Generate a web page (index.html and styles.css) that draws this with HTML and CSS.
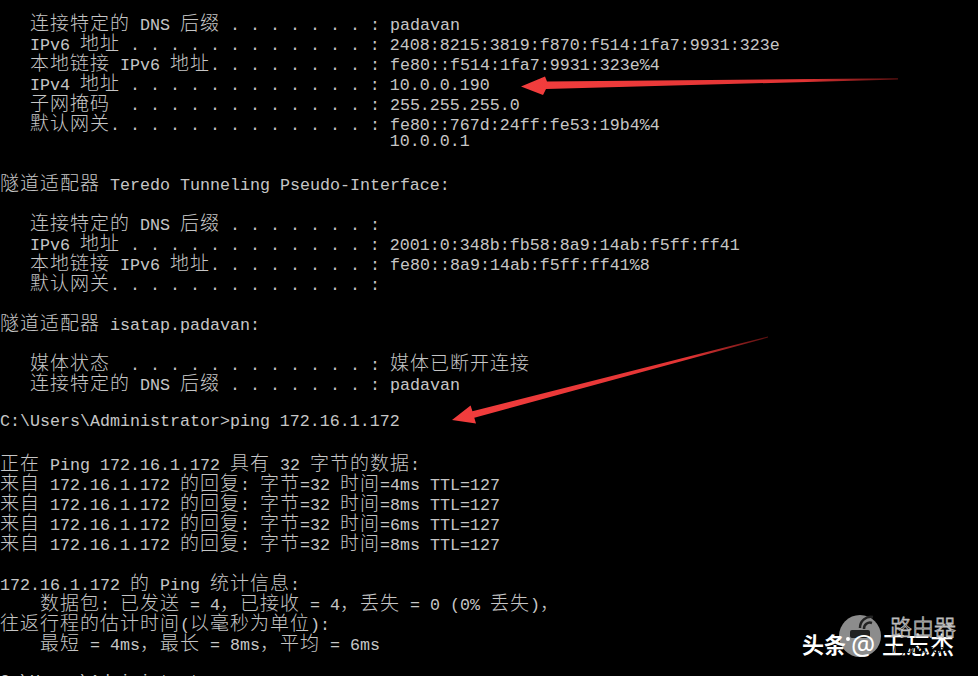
FILE: index.html
```html
<!DOCTYPE html>
<html lang="zh-CN">
<head>
<meta charset="utf-8">
<title>命令提示符</title>
<link rel="stylesheet" href="styles.css">
</head>
<body>
<main class="console">
<div class="l">   <span class="c">连接特定的</span> DNS <span class="c">后缀</span> . . . . . . . : padavan</div>
<div class="l">   IPv6 <span class="c">地址</span> . . . . . . . . . . . . : 2408:8215:3819:f870:f514:1fa7:9931:323e</div>
<div class="l">   <span class="c">本地链接</span> IPv6 <span class="c">地址</span>. . . . . . . . : fe80::f514:1fa7:9931:323e%4</div>
<div class="l">   IPv4 <span class="c">地址</span> . . . . . . . . . . . . : 10.0.0.190</div>
<div class="l">   <span class="c">子网掩码</span>  . . . . . . . . . . . . : 255.255.255.0</div>
<div class="l">   <span class="c">默认网关</span>. . . . . . . . . . . . . : fe80::767d:24ff:fe53:19b4%4</div>
<div class="l">                                       10.0.0.1</div>
<div class="l"> </div>
<div class="l"><span class="c">隧道适配器</span> Teredo Tunneling Pseudo-Interface:</div>
<div class="l"> </div>
<div class="l">   <span class="c">连接特定的</span> DNS <span class="c">后缀</span> . . . . . . . :</div>
<div class="l">   IPv6 <span class="c">地址</span> . . . . . . . . . . . . : 2001:0:348b:fb58:8a9:14ab:f5ff:ff41</div>
<div class="l">   <span class="c">本地链接</span> IPv6 <span class="c">地址</span>. . . . . . . . : fe80::8a9:14ab:f5ff:ff41%8</div>
<div class="l">   <span class="c">默认网关</span>. . . . . . . . . . . . . :</div>
<div class="l"> </div>
<div class="l"><span class="c">隧道适配器</span> isatap.padavan:</div>
<div class="l"> </div>
<div class="l">   <span class="c">媒体状态</span>  . . . . . . . . . . . . : <span class="c">媒体已断开连接</span></div>
<div class="l">   <span class="c">连接特定的</span> DNS <span class="c">后缀</span> . . . . . . . : padavan</div>
<div class="l"> </div>
<div class="l">C:\Users\Administrator&gt;ping 172.16.1.172</div>
<div class="l"> </div>
<div class="l"><span class="c">正在</span> Ping 172.16.1.172 <span class="c">具有</span> 32 <span class="c">字节的数据</span>:</div>
<div class="l"><span class="c">来自</span> 172.16.1.172 <span class="c">的回复</span>: <span class="c">字节</span>=32 <span class="c">时间</span>=4ms TTL=127</div>
<div class="l"><span class="c">来自</span> 172.16.1.172 <span class="c">的回复</span>: <span class="c">字节</span>=32 <span class="c">时间</span>=8ms TTL=127</div>
<div class="l"><span class="c">来自</span> 172.16.1.172 <span class="c">的回复</span>: <span class="c">字节</span>=32 <span class="c">时间</span>=6ms TTL=127</div>
<div class="l"><span class="c">来自</span> 172.16.1.172 <span class="c">的回复</span>: <span class="c">字节</span>=32 <span class="c">时间</span>=8ms TTL=127</div>
<div class="l"> </div>
<div class="l">172.16.1.172 <span class="c">的</span> Ping <span class="c">统计信息</span>:</div>
<div class="l">    <span class="c">数据包</span>: <span class="c">已发送</span> = 4<span class="c">，已接收</span> = 4<span class="c">，丢失</span> = 0 (0% <span class="c">丢失</span>)<span class="c">，</span></div>
<div class="l"><span class="c">往返行程的估计时间</span>(<span class="c">以毫秒为单位</span>):</div>
<div class="l">    <span class="c">最短</span> = 4ms<span class="c">，最长</span> = 8ms<span class="c">，平均</span> = 6ms</div>
<div class="l"> </div>
<div class="l">C:\Users\Administrator&gt;</div>
</main>

<svg class="arrows" width="978" height="676" viewBox="0 0 978 676" aria-hidden="true">
  <defs>
    <linearGradient id="g1" x1="521" y1="0" x2="898" y2="0" gradientUnits="userSpaceOnUse">
      <stop offset="0" stop-color="#f23d3d"/>
      <stop offset="0.75" stop-color="#e23434"/>
      <stop offset="1" stop-color="#5a1010"/>
    </linearGradient>
    <linearGradient id="g2" x1="452" y1="420" x2="768" y2="337" gradientUnits="userSpaceOnUse">
      <stop offset="0" stop-color="#f23d3d"/>
      <stop offset="0.75" stop-color="#e23434"/>
      <stop offset="1" stop-color="#5a1010"/>
    </linearGradient>
  </defs>
  <polygon fill="url(#g1)" points="898,78.3 547,81.5 545,76.5 521,86.5 543,95 546,89 898,79.5"/>
  <polygon fill="url(#g2)" points="768,336.6 472.4,411.2 470.6,405.5 452,420 476,423.4 474.3,417.8 768,337.6"/>
</svg>

<svg class="mark" width="198" height="81" viewBox="0 0 198 81">
  <circle cx="80" cy="41" r="21" fill="#8c8c8c"/>
  <path d="M84 34 a6 6 0 0 1 8 -6" stroke="#222" stroke-width="2.5" fill="none"/>
  <path d="M80 33 a11 11 0 0 1 13 -11" stroke="#222" stroke-width="2.5" fill="none"/>
  <rect x="70" y="35" width="20" height="8" rx="2" fill="#222"/>
  <text class="mk-a" x="22" y="58">头条</text>
  <circle cx="68" cy="44" r="2" fill="#fff"/>
  <text class="mk-b" x="71" y="60">@</text>
  <text class="mk-c" x="102" y="59">王忘杰</text>
  <text class="mk-d" x="110" y="40">路由器</text>
  <text class="mk-e" x="113" y="58">luyouqi.com</text>
</svg>
</body>
</html>
```

FILE: styles.css
```css
html, body {
  margin: 0;
  padding: 0;
  background: #000;
  width: 978px;
  height: 676px;
  overflow: hidden;
}

.console {
  padding-top: 12px;
  color: #c6c6c6;
  font-family: "Liberation Mono", monospace;
  font-size: 16.6667px;
  line-height: 20px;
}

.l {
  height: 20px;
  white-space: pre;
}

.c {
  font-family: "Noto Sans CJK SC", sans-serif;
  font-weight: 300;
  font-size: 19px;
  letter-spacing: 1px;
  line-height: 20px;
}

.arrows {
  position: absolute;
  left: 0;
  top: 0;
  pointer-events: none;
}

.mark {
  position: absolute;
  left: 780px;
  top: 595px;
}

.mk-a {
  font-family: "Noto Sans CJK SC", sans-serif;
  font-weight: 700;
  font-size: 22px;
  fill: #fff;
}

.mk-b {
  font-family: "Noto Sans", sans-serif;
  font-size: 27px;
  fill: #fff;
}

.mk-c {
  font-family: "Noto Sans CJK SC", sans-serif;
  font-weight: 500;
  font-size: 24px;
  fill: #fff;
}

.mk-d {
  font-family: "Noto Sans CJK SC", sans-serif;
  font-weight: 300;
  font-size: 22px;
  fill: none;
  stroke: #bdbdbd;
  stroke-width: 0.8;
}

.mk-e {
  font-family: "Noto Sans", sans-serif;
  font-style: italic;
  font-size: 10px;
  fill: #000;
}
```
